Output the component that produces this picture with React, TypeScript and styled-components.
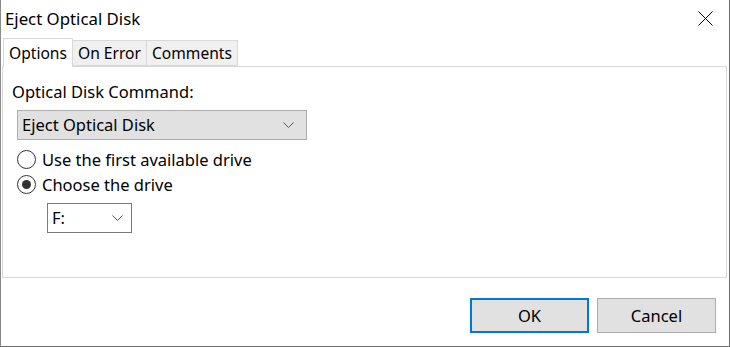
import React, { useState } from "react";
import styled, { createGlobalStyle } from "styled-components";

const Global = createGlobalStyle`
  html, body { margin: 0; padding: 0; background: #ffffff; }
  body { font-family: "Noto Sans", "Open Sans", sans-serif; color: #000; }
  * { box-sizing: border-box; }
`;

const FONT = `"Noto Sans", "Open Sans", sans-serif`;

const Window = styled.div`
  width: 730px;
  height: 347px;
  background: #fff;
  border-left: 1px solid #8a8a8a;
  border-right: 1px solid #6e6e6e;
  border-bottom: 1px solid #6e6e6e;
  display: flex;
  flex-direction: column;
  font-family: ${FONT};
  font-size: 16.5px;
`;

const TitleBar = styled.div`
  height: 38px;
  display: flex;
  align-items: flex-start;
  justify-content: space-between;
  padding: 6px 16px 0 4px;
`;

const Title = styled.div`
  font-size: 16.8px;
  line-height: 26px;
  color: #000;
`;

const CloseIcon = styled.svg`
  width: 15px;
  height: 15px;
  margin-top: 5px;
`;

const TabRow = styled.div`
  display: flex;
  align-items: flex-end;
  height: 28px;
  padding-left: 2px;
  position: relative;
  z-index: 1;
`;

const Tab = styled.div<{ $active?: boolean }>`
  height: ${(p) => (p.$active ? "29px" : "26px")};
  margin-bottom: ${(p) => (p.$active ? "-1px" : "0")};
  padding: 0 5px;
  display: flex;
  align-items: center;
  background: ${(p) => (p.$active ? "#ffffff" : "#f0f0f0")};
  border: 1px solid #d9d9d9;
  border-bottom: ${(p) => (p.$active ? "none" : "1px solid #d9d9d9")};
  margin-left: -1px;
  &:first-child { margin-left: 0; }
  font-size: 15.6px;
  line-height: 20px;
`;

const Panel = styled.div`
  height: 212px;
  margin: 0 2px 0 1px;
  border: 1px solid #d9d9d9;
  background: #fff;
  padding: 14px 9px 0 9px;
  display: flex;
  flex-direction: column;
`;

const Label = styled.div`
  line-height: 22px;
`;

const Select = styled.div<{ $width: number; $variant: "button" | "field" }>`
  width: ${(p) => p.$width}px;
  height: 30px;
  display: flex;
  align-items: center;
  justify-content: space-between;
  padding: 0 12px 0 4px;
  background: ${(p) => (p.$variant === "button" ? "#e1e1e1" : "#ffffff")};
  border: 1px solid ${(p) => (p.$variant === "button" ? "#adadad" : "#7a7a7a")};
  line-height: 22px;
`;

const Chevron = styled.svg`
  width: 11px;
  height: 6px;
`;

const CommandSelect = styled(Select)`
  margin: 7px 0 0 5px;
`;

const RadioGroup = styled.div`
  display: flex;
  flex-direction: column;
  margin: 7px 0 0 5px;
`;

const RadioRow = styled.label`
  display: flex;
  align-items: center;
  height: 25px;
  gap: 6px;
  line-height: 22px;
  cursor: default;
`;

const RadioCircle = styled.span<{ $checked?: boolean }>`
  width: 19px;
  height: 19px;
  border-radius: 50%;
  border: 1px solid #333;
  background: #fff;
  display: flex;
  align-items: center;
  justify-content: center;
  &::after {
    content: "";
    width: 9px;
    height: 9px;
    border-radius: 50%;
    background: ${(p) => (p.$checked ? "#333" : "transparent")};
  }
`;

const DriveSelect = styled(Select)`
  margin: 6px 0 0 35px;
  padding-right: 8px;
`;

const Footer = styled.div`
  flex: 1;
  display: flex;
  justify-content: flex-end;
  align-items: flex-start;
  gap: 8px;
  padding: 20px 13px 0 0;
`;

const Button = styled.button<{ $default?: boolean }>`
  width: 119px;
  height: 35px;
  background: #e1e1e1;
  border: ${(p) => (p.$default ? "2px solid #0078d7" : "1px solid #adadad")};
  font-family: ${FONT};
  font-size: 16.5px;
  color: #000;
  padding: 0;
`;

const ChevronDown = () => (
  <Chevron viewBox="0 0 11 6">
    <path d="M0.5 0.5 L5.5 5.5 L10.5 0.5" fill="none" stroke="#555" strokeWidth="1" />
  </Chevron>
);

export default function App() {
  const [choice, setChoice] = useState<"first" | "choose">("choose");
  return (
    <>
      <Global />
      <Window>
        <TitleBar>
          <Title>Eject Optical Disk</Title>
          <CloseIcon viewBox="0 0 15 15">
            <path d="M0.5 0.5 L14.5 14.5 M14.5 0.5 L0.5 14.5" stroke="#000" strokeWidth="1" />
          </CloseIcon>
        </TitleBar>
        <TabRow>
          <Tab $active>Options</Tab>
          <Tab>On Error</Tab>
          <Tab>Comments</Tab>
        </TabRow>
        <Panel>
          <Label>Optical Disk Command:</Label>
          <CommandSelect $width={290} $variant="button">
            <span>Eject Optical Disk</span>
            <ChevronDown />
          </CommandSelect>
          <RadioGroup>
            <RadioRow onClick={() => setChoice("first")}>
              <RadioCircle $checked={choice === "first"} />
              Use the first available drive
            </RadioRow>
            <RadioRow onClick={() => setChoice("choose")}>
              <RadioCircle $checked={choice === "choose"} />
              Choose the drive
            </RadioRow>
          </RadioGroup>
          <DriveSelect $width={85} $variant="field">
            <span>F:</span>
            <ChevronDown />
          </DriveSelect>
        </Panel>
        <Footer>
          <Button $default>OK</Button>
          <Button>Cancel</Button>
        </Footer>
      </Window>
    </>
  );
}
